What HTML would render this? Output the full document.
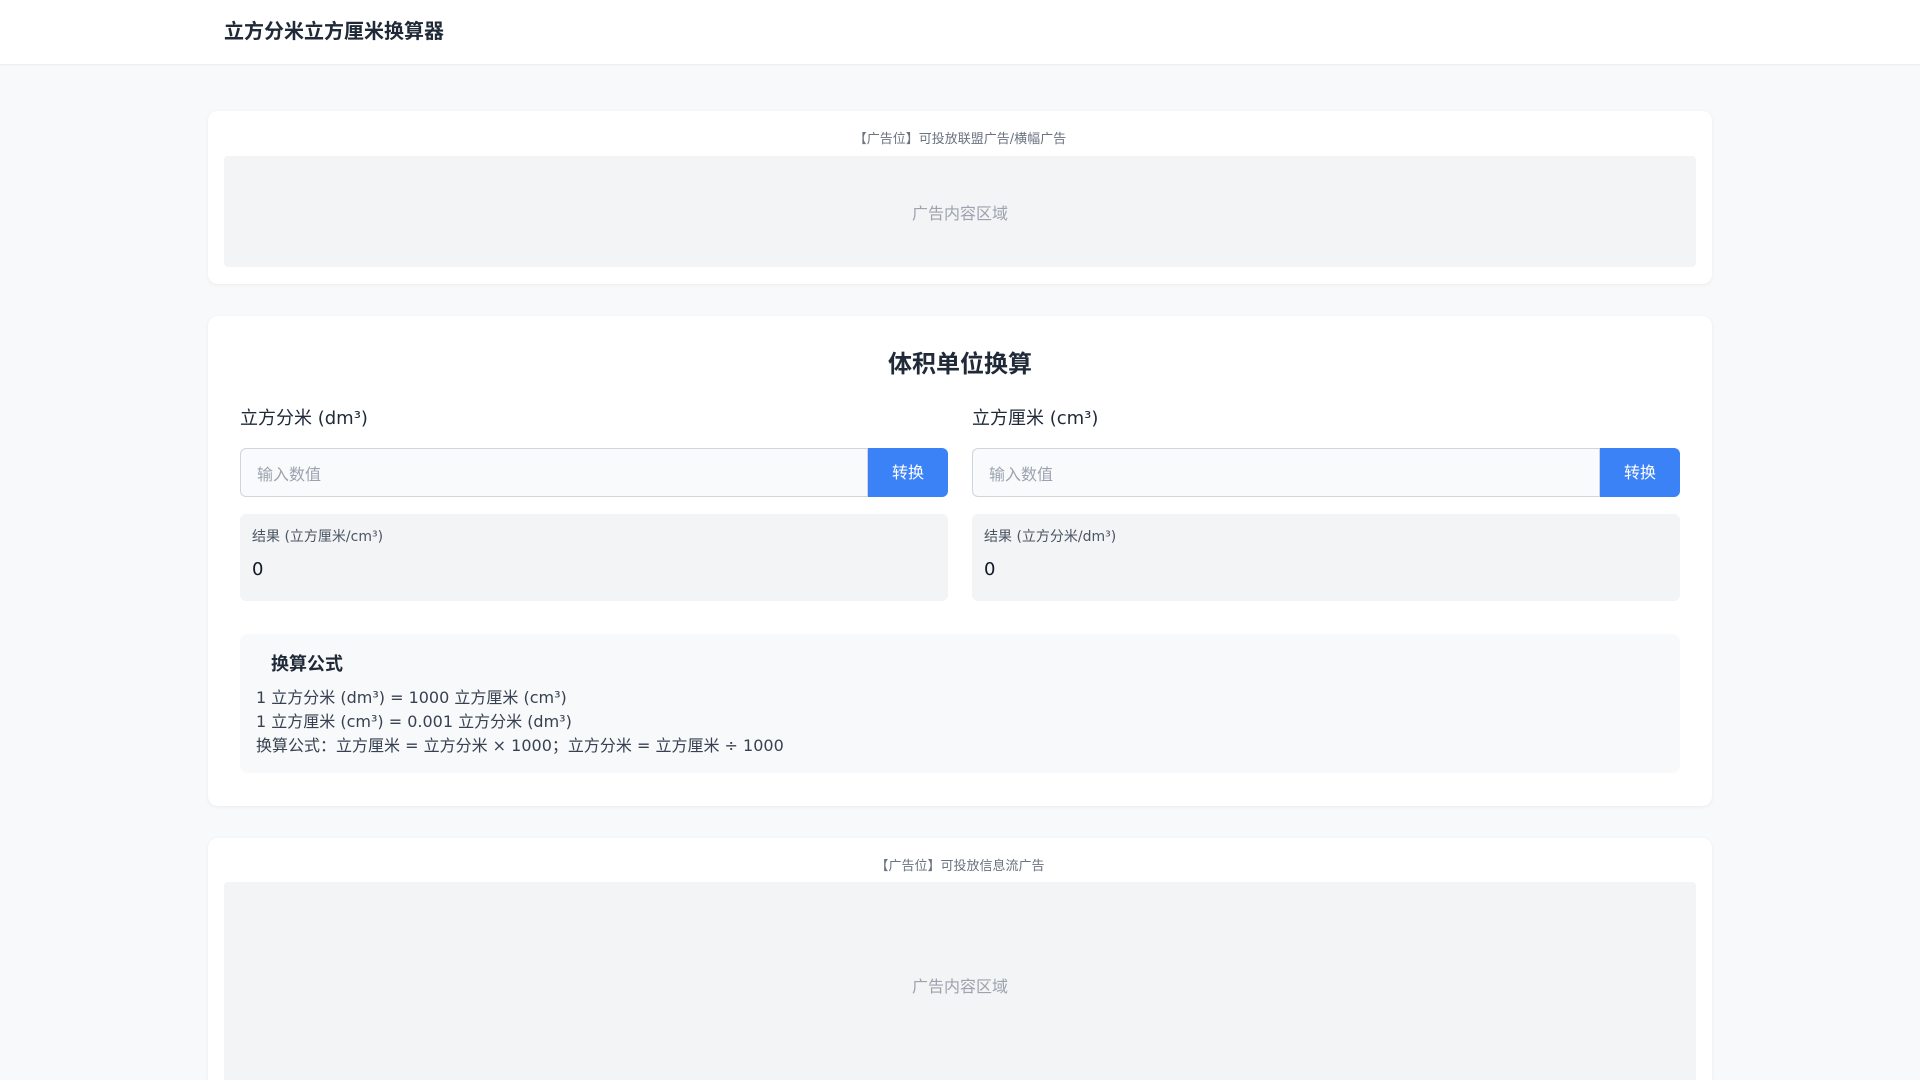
<!DOCTYPE html>
<html><head><meta charset="utf-8"><style>
*{box-sizing:border-box;margin:0;padding:0}
html,body{width:1920px;height:1080px;overflow:hidden}
body{background:#f8f9fb;font-family:"DejaVu Sans","Noto Sans CJK SC",sans-serif;color:#1f2937}
#wrap{position:relative;width:1920px;height:1080px;overflow:hidden}
.hdr{height:64px;background:#fff;box-shadow:0 1px 2px rgba(0,0,0,.06);position:relative}
.hdr h1{position:absolute;left:224px;top:15px;font-size:20px;font-weight:700;color:#1f2937;font-family:"Noto Sans CJK SC",sans-serif}
.card{position:absolute;left:208px;width:1504px;background:#fff;border-radius:10px;box-shadow:0 1px 4px rgba(0,0,0,.06)}
.adl{text-align:center;font-size:13px;color:#6b7280}
.adb{position:absolute;left:16px;right:16px;background:#f3f4f6;border-radius:4px;display:flex;align-items:center;justify-content:center;color:#9ca3af;font-size:16px}
.col{position:absolute;top:0;width:708px}
.lab{position:absolute;top:88px;font-size:18px;color:#1f2937}
.inp{position:absolute;top:132px;left:0;width:628px;height:49px;border:1px solid #d1d5db;border-radius:6px 0 0 6px;background:#f9fafb;font-size:16px;color:#9ca3af;padding:12px 16px}
.btn{position:absolute;top:132px;left:628px;width:80px;height:49px;background:#3b82f6;border-radius:0 6px 6px 0;color:#fff;font-size:16px;text-align:center;line-height:49px}
.res{position:absolute;top:198px;left:0;width:708px;height:87px;background:#f3f4f6;border-radius:6px}
.res .a{position:absolute;left:12px;top:12px;font-size:14px;color:#4b5563}
.res .b{position:absolute;left:12px;top:45px;font-size:18px;color:#111827}
</style></head><body><div id="wrap">
<div class="hdr"><h1>立方分米立方厘米换算器</h1></div>
<div class="card" style="top:111px;height:173px">
<div class="adl" style="padding-top:17px">【广告位】可投放联盟广告/横幅广告</div>
<div class="adb" style="top:45px;height:111px">广告内容区域</div>
</div>
<div class="card" style="top:316px;height:490px">
<div style="position:absolute;top:28px;width:100%;text-align:center;font-size:24px;font-weight:700;color:#1f2937">体积单位换算</div>
<div class="col" style="left:32px">
<div class="lab">立方分米 (dm³)</div>
<div class="inp">输入数值</div><div class="btn">转换</div>
<div class="res"><div class="a">结果 (立方厘米/cm³)</div><div class="b">0</div></div>
</div>
<div class="col" style="left:764px">
<div class="lab">立方厘米 (cm³)</div>
<div class="inp">输入数值</div><div class="btn">转换</div>
<div class="res"><div class="a">结果 (立方分米/dm³)</div><div class="b">0</div></div>
</div>
<div style="position:absolute;left:32px;top:318px;width:1440px;height:139px;background:#f8f9fb;border-radius:8px">
<div style="position:absolute;left:31px;top:16px;font-size:18px;font-weight:700;color:#1f2937">换算公式</div>
<div style="position:absolute;left:16px;top:52px;font-size:16px;line-height:24px;color:#374151">1 立方分米 (dm³) = 1000 立方厘米 (cm³)<br>1 立方厘米 (cm³) = 0.001 立方分米 (dm³)<br>换算公式：立方厘米 = 立方分米 × 1000；立方分米 = 立方厘米 ÷ 1000</div>
</div>
</div>
<div class="card" style="top:838px;height:242px;border-radius:10px 10px 0 0">
<div class="adl" style="padding-top:17px">【广告位】可投放信息流广告</div>
<div class="adb" style="top:44px;height:198px;align-items:flex-start;padding-top:91px;border-radius:4px 4px 0 0">广告内容区域</div>
</div>
</div></body></html>
